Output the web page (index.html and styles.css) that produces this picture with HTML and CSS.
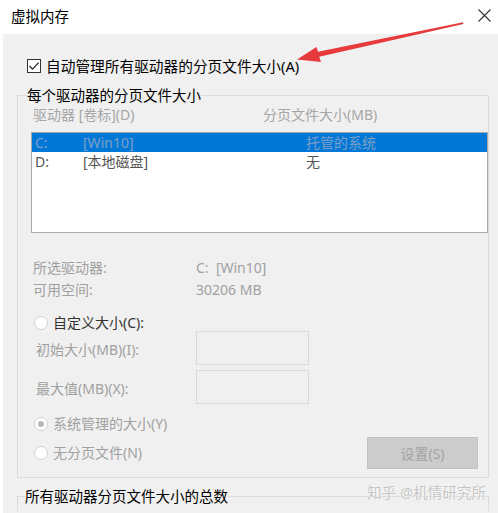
FILE: index.html
```html
<!DOCTYPE html>
<html lang="zh-CN">
<head>
<meta charset="utf-8">
<title>虚拟内存</title>
<link rel="stylesheet" href="styles.css">
</head>
<body>
<div class="titlebar">
  <span class="title">虚拟内存</span>
  <svg class="close" width="13" height="13" viewBox="0 0 13 13"><path d="M0.5 0.5 L12.5 12.5 M12.5 0.5 L0.5 12.5" stroke="#333" stroke-width="1.1" fill="none"/></svg>
</div>
<div class="dialog">
  <div class="auto-row">
    <span class="checkbox"><svg width="12" height="12" viewBox="0 0 12 12"><path d="M1.5 6 L4.5 9.2 L10.6 2.6" stroke="#222" stroke-width="1.2" fill="none"/></svg></span>
    <span class="auto-label">自动管理所有驱动器的分页文件大小(A)</span>
  </div>
  <fieldset class="group">
    <legend>每个驱动器的分页文件大小</legend>
    <div class="cols">
      <span>驱动器 [卷标](D)</span>
      <span>分页文件大小(MB)</span>
    </div>
    <div class="listbox">
      <div class="row selected"><span>C:</span><span>[Win10]</span><span>托管的系统</span></div>
      <div class="row"><span>D:</span><span>[本地磁盘]</span><span>无</span></div>
    </div>
    <div class="info">
      <span>所选驱动器:</span><span>C:&nbsp; [Win10]</span>
      <span>可用空间:</span><span>30206 MB</span>
    </div>
    <div class="radio-row custom"><span class="radio"></span><span class="radio-label dark">自定义大小(C):</span></div>
    <div class="input-row first"><span class="input-label">初始大小(MB)(I):</span><span class="input-box"></span></div>
    <div class="input-row"><span class="input-label">最大值(MB)(X):</span><span class="input-box"></span></div>
    <div class="radio-row system"><span class="radio checked"></span><span class="radio-label">系统管理的大小(Y)</span></div>
    <div class="last-row">
      <div class="radio-row"><span class="radio"></span><span class="radio-label">无分页文件(N)</span></div>
      <button class="set-btn" disabled>设置(S)</button>
    </div>
  </fieldset>
  <fieldset class="group total">
    <legend>所有驱动器分页文件大小的总数</legend>
    <div class="spacer"></div>
  </fieldset>
</div>
<div class="watermark">知乎 @机情研究所</div>
<svg class="arrow" width="498" height="513" viewBox="0 0 498 513"><polygon points="297,59.5 316.5,47 318,51.8 463,22.2 463.4,24 319.2,56.8 321,62" fill="#e63a3c"/></svg>
</body>
</html>
```
FILE: styles.css
```css
* { box-sizing: border-box; }
html, body { margin: 0; padding: 0; }
body {
  width: 498px;
  height: 513px;
  overflow: hidden;
  position: relative;
  background: #ffffff;
  font-family: "Noto Sans", "Noto Sans CJK SC", sans-serif;
  font-size: 14px;
  color: #111;
}
.titlebar {
  height: 34px;
  display: flex;
  align-items: center;
  justify-content: space-between;
  padding: 0 7px 2px 11px;
}
.title { font-size: 14.5px; line-height: 20px; color: #000; }
.close { display: block; margin-top: -1px; }
.dialog {
  margin-left: 3px;
  height: 479px;
  background: #f0f0f0;
  padding-top: 22px;
  overflow: hidden;
}
.auto-row {
  display: flex;
  align-items: center;
  gap: 5px;
  margin-left: 24px;
  height: 20px;
}
.checkbox {
  width: 14px;
  height: 14px;
  border: 1px solid #333;
  background: #fff;
  display: flex;
  align-items: center;
  justify-content: center;
}
.checkbox svg { display: block; }
.auto-label { font-size: 14.7px; line-height: 20px; color: #000; }
.group {
  margin: 9px 0 0 14px;
  width: 472px;
  min-inline-size: 0;
  border: 1px solid #dcdcdc;
  padding: 0 0 8px 9px;
}
.group legend {
  padding: 0;
  font-size: 14.5px;
  line-height: 20px;
  color: #000;
}
.cols {
  display: grid;
  grid-template-columns: 230px auto;
  padding-left: 6px;
  height: 20px;
  line-height: 20px;
  color: #a6a6a6;
}
.listbox {
  margin: 7px 0 0 4px;
  width: 457px;
  height: 101px;
  border: 1px solid #a9a9a9;
  background: #fff;
}
.row {
  display: grid;
  grid-template-columns: 48px 223px auto;
  height: 19px;
  line-height: 19px;
  padding-left: 3px;
  color: #555;
}
.row.selected { background: #0078d7; color: #7f9fc6; }
.info {
  display: grid;
  grid-template-columns: 163px auto;
  margin-top: 24px;
  padding-left: 6px;
  line-height: 22px;
  color: #a0a0a0;
}
.radio-row {
  display: flex;
  align-items: center;
  gap: 5px;
  margin-left: 7px;
  height: 20px;
}
.radio-row.custom { margin-top: 13px; height: 17px; }
.radio-row.system { margin-top: 10px; }
.radio {
  width: 14px;
  height: 14px;
  border-radius: 50%;
  border: 1px solid #d2d2d2;
  background: #fff;
  display: flex;
  align-items: center;
  justify-content: center;
}
.radio.checked::after {
  content: "";
  width: 6px;
  height: 6px;
  border-radius: 50%;
  background: #b8b8b8;
}
.radio-label { line-height: 20px; color: #a0a0a0; }
.radio-label.dark { color: #333; }
.input-row {
  display: flex;
  align-items: center;
  height: 34px;
  margin-top: 5px;
}
.input-row.first { margin-top: 0; }
.input-label {
  width: 169px;
  padding-left: 9px;
  color: #a0a0a0;
  padding-top: 2px;
}
.input-box {
  width: 113px;
  height: 34px;
  border: 1px solid #d9d9d9;
  background: #f0f0f0;
}
.last-row {
  display: flex;
  align-items: center;
  justify-content: space-between;
  margin-top: 3px;
  height: 32px;
}
.last-row .radio-row { margin-top: 0; }
.set-btn {
  width: 111px;
  height: 32px;
  margin-right: 10px;
  border: 1px solid #c2c2c2;
  background: #cccccc;
  color: #a3a3a3;
  font-family: inherit;
  font-size: 14px;
  padding: 0;
}
.group.total {
  margin-top: 8px;
  padding: 0 0 0 7px;
  border-bottom: 0;
}
.spacer { height: 5px; }
.watermark {
  position: absolute;
  left: 367px;
  top: 482px;
  font-size: 14.6px;
  line-height: 20px;
  color: #c4c4c4;
  text-shadow: 0 0 2px #fff, 0 0 1px #fff;
}
.arrow {
  position: absolute;
  left: 0;
  top: 0;
  pointer-events: none;
}
```
